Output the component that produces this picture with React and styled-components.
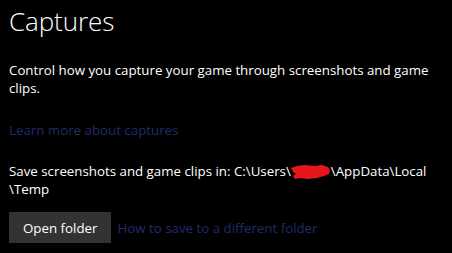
import React from 'react';
import styled, { createGlobalStyle } from 'styled-components';

const GlobalStyle = createGlobalStyle`
  html, body {
    margin: 0;
    padding: 0;
    background: #000;
  }
  body {
    font-family: "Open Sans", "Noto Sans", sans-serif;
    color: #fff;
  }
`;

const Page = styled.div`
  width: 452px;
  height: 253px;
  box-sizing: border-box;
  padding: 4px 9px 0 9px;
  display: flex;
  flex-direction: column;
  overflow: hidden;
`;

const Title = styled.h1`
  margin: 0;
  font-size: 26px;
  font-weight: 300;
  line-height: 34px;
  letter-spacing: -0.1px;
`;

const Text = styled.p`
  margin: ${(p) => p.$top || 0}px 0 0 0;
  font-size: 13.3px;
  line-height: 18px;
  max-width: 436px;
`;

const Link = styled.a`
  color: #222a68;
  text-decoration: none;
  font-size: 13.3px;
  line-height: 18px;
  cursor: pointer;
`;

const LinkRow = styled.div`
  margin-top: 21px;
`;

const Redacted = styled.span`
  display: inline-block;
  width: 40px;
  height: 16px;
  vertical-align: -4px;
`;

const Actions = styled.div`
  display: flex;
  align-items: center;
  gap: 6px;
  margin-top: 14px;
`;

const Button = styled.button`
  height: 31px;
  padding: 0 14px;
  background: #333;
  border: none;
  color: #fff;
  font-family: inherit;
  font-size: 13.3px;
`;

function Scribble() {
  return (
    <Redacted>
      <svg width="40" height="16" viewBox="0 0 40 16">
        <path
          d="M0 4 L6 2 L14 1 L24 2 L31 1 L37 3 L39 6 L38 10 L33 12 L26 14 L17 15 L9 14 L4 15 L2 12 L5 10 L2 8 Z"
          fill="#e8151b"
        />
      </svg>
    </Redacted>
  );
}

export default function App() {
  return (
    <>
      <GlobalStyle />
      <Page>
        <Title>Captures</Title>
        <Text $top={23}>
          Control how you capture your game through screenshots and game clips.
        </Text>
        <LinkRow>
          <Link>Learn more about captures</Link>
        </LinkRow>
        <Text $top={22}>
          Save screenshots and game clips in: C:\Users\<Scribble />\AppData\Local
          \Temp
        </Text>
        <Actions>
          <Button>Open folder</Button>
          <Link>How to save to a different folder</Link>
        </Actions>
      </Page>
    </>
  );
}
